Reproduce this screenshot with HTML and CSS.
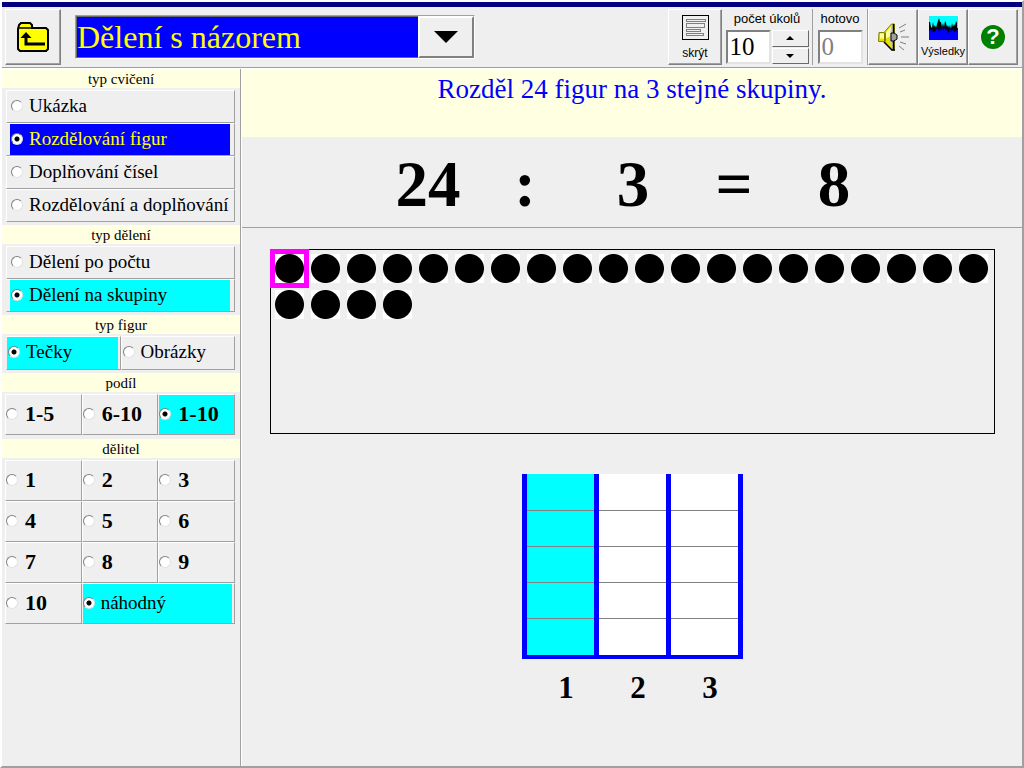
FILE: index.html
```html
<!DOCTYPE html>
<html lang="cs">
<head>
<meta charset="utf-8">
<title>Dělení s názorem</title>
<link rel="stylesheet" href="styles.css">
</head>
<body>
<div class="window">
  <header class="toolbar">
    <button class="tool back" type="button" aria-label="Zpět">
      <svg width="32" height="30" viewBox="0 0 32 30"><path d="M2 3l2-2h9l2 2v3h14l2 2v19l-2 2H3l-2-2V7z" fill="#ff0" stroke="#000" stroke-width="2"/><path d="M2 6h13" stroke="#000" stroke-width="1.5"/><path d="M9 15v7h19" fill="none" stroke="#000" stroke-width="3"/><path d="M3.500 16l5.500-6 5.500 6z" fill="#000"/></svg>
    </button>
    <div class="combo">
      <select class="combo-select" aria-label="Cvičení"><option>Dělení s názorem</option></select>
      <span class="combo-arrow"><svg width="24" height="12" viewBox="0 0 24 12"><path d="M0 0h24L12 12z"/></svg></span>
    </div>
    <button class="tool hide" type="button">
      <svg width="27" height="25" viewBox="0 0 27 25" fill="none" shape-rendering="crispEdges"><path d="M.5.5h26v24H.5z" stroke="#000"/><path d="M4.500 4.500h19v2h-19zM4.500 8.500h18v4h-18zM4.500 14.500h14v2h-14zM4.500 18.500h17v2h-17z" stroke="#808080"/></svg>
      <span>skrýt</span>
    </button>
    <div class="field">
      <label for="count">počet úkolů</label>
      <div class="field-row">
        <input id="count" class="number" type="text" value="10">
        <div class="spinner">
          <button type="button" aria-label="Více"><svg width="8" height="4" viewBox="0 0 8 4"><path d="M0 4h8L4 0z"/></svg></button>
          <button type="button" aria-label="Méně"><svg width="8" height="4" viewBox="0 0 8 4"><path d="M0 0h8L4 4z"/></svg></button>
        </div>
      </div>
    </div>
    <div class="field done">
      <label for="done">hotovo</label>
      <input id="done" class="number" type="text" value="0" disabled>
    </div>
    <button class="tool narrow" type="button" aria-label="Zvuk">
      <svg width="31" height="28" viewBox="0 0 31 28"><path d="M1 9.500h5L13.500 1h3v26h-3L6 18.500H.5z" fill="#e8e000" stroke="#808000"/><path d="M2 10.500h5l6-7v9l-5 3H2z" fill="#ffff9c"/><path d="M7 9.500v9" stroke="#808000" stroke-width="2"/><path d="M13.500 2c-2 8-2 16 0 24h1.500V2z" fill="#c8c8c8"/><path d="M15.500 1v26M6 19l8 8h3" fill="none" stroke="#000" stroke-width="1.500"/><path d="M13 10h3l3 2v4l-3 2h-3z" fill="#a0a0a0" stroke="#000"/><path d="M21 5l7-4M22 9l5-2M23 14h8M22 19l6 2M21 23l5 4" stroke="#808080"/></svg>
    </button>
    <button class="tool narrow results" type="button">
      <svg width="29" height="24" viewBox="0 0 29 24"><path d="M0 0h29v24H0z" fill="#0ff"/><path d="M0 12h29v12H0z" fill="#00f"/><path d="M0 6l1 0 1 5 1 1 1-6 1 5 1-2 1 3 1-4 1-3 1-3 1 4 1 0 1 5 1-4 1 4 1-6 1 2 1 4 1-2 1 3 1-3 1 4 1-6 1 4 1-3 1 2 1-5 1 2v8l-1-1-1 3-1-3-1 1-1-2-1 3-1-4-1 4-1 1-1-4-1 2-1-2-1-1-1 3-1-4-1 4-1-3-1 4-1-4-1 2-1-2-1 4-1-1-1 2-1-4-1 2-1-2-1 3-1-4z" fill="#000"/></svg>
      <span>Výsledky</span>
    </button>
    <button class="tool narrow" type="button" aria-label="Nápověda"><span class="help">?</span></button>
  </header>

  <div class="body">
    <form class="sidebar">
      <h2>typ cvičení</h2>
      <div class="group">
        <label class="option"><input type="radio" name="exercise"><span>Ukázka</span></label>
        <label class="option primary"><input type="radio" name="exercise" checked><span>Rozdělování figur</span></label>
        <label class="option"><input type="radio" name="exercise"><span>Doplňování čísel</span></label>
        <label class="option"><input type="radio" name="exercise"><span>Rozdělování a doplňování</span></label>
      </div>
      <h2>typ dělení</h2>
      <div class="group">
        <label class="option"><input type="radio" name="division"><span>Dělení po počtu</span></label>
        <label class="option"><input type="radio" name="division" checked><span>Dělení na skupiny</span></label>
      </div>
      <h2>typ figur</h2>
      <div class="group two">
        <label class="option"><input type="radio" name="figure" checked><span>Tečky</span></label>
        <label class="option"><input type="radio" name="figure"><span>Obrázky</span></label>
      </div>
      <h2>podíl</h2>
      <div class="group three">
        <label class="option"><input type="radio" name="quotient"><span>1-5</span></label>
        <label class="option"><input type="radio" name="quotient"><span>6-10</span></label>
        <label class="option"><input type="radio" name="quotient" checked><span>1-10</span></label>
      </div>
      <h2>dělitel</h2>
      <div class="group three">
        <label class="option"><input type="radio" name="divisor"><span>1</span></label>
        <label class="option"><input type="radio" name="divisor"><span>2</span></label>
        <label class="option"><input type="radio" name="divisor"><span>3</span></label>
        <label class="option"><input type="radio" name="divisor"><span>4</span></label>
        <label class="option"><input type="radio" name="divisor"><span>5</span></label>
        <label class="option"><input type="radio" name="divisor"><span>6</span></label>
        <label class="option"><input type="radio" name="divisor"><span>7</span></label>
        <label class="option"><input type="radio" name="divisor"><span>8</span></label>
        <label class="option"><input type="radio" name="divisor"><span>9</span></label>
        <label class="option"><input type="radio" name="divisor"><span>10</span></label>
        <label class="option random"><input type="radio" name="divisor" checked><span>náhodný</span></label>
      </div>
    </form>

    <main class="stage">
      <h1 class="prompt">Rozděl 24 figur na 3 stejné skupiny.</h1>
      <div class="equation"><span>24</span><span>:</span><span>3</span><span>=</span><span>8</span></div>
      <div class="pool">
        <i class="dot selected"></i><i class="dot"></i><i class="dot"></i><i class="dot"></i><i class="dot"></i><i class="dot"></i>
        <i class="dot"></i><i class="dot"></i><i class="dot"></i><i class="dot"></i><i class="dot"></i><i class="dot"></i>
        <i class="dot"></i><i class="dot"></i><i class="dot"></i><i class="dot"></i><i class="dot"></i><i class="dot"></i>
        <i class="dot"></i><i class="dot"></i><i class="dot"></i><i class="dot"></i><i class="dot"></i><i class="dot"></i>
      </div>
      <div class="bins">
        <div class="bin active"><i></i><i></i><i></i><i></i><i></i></div>
        <div class="bin"><i></i><i></i><i></i><i></i><i></i></div>
        <div class="bin"><i></i><i></i><i></i><i></i><i></i></div>
      </div>
      <div class="bin-labels"><span>1</span><span>2</span><span>3</span></div>
    </main>
  </div>
</div>
</body>
</html>
```
FILE: styles.css
```css
* { box-sizing: border-box; }

body {
  margin: 0;
  background: #efefef;
  color: #000;
  font-family: "Liberation Serif", serif;
}

button, input, select { margin: 0; font: inherit; color: inherit; border-radius: 0; }
button { cursor: pointer; }
svg { display: block; flex: none; }

.window {
  display: flex;
  flex-direction: column;
  min-height: 100vh;
  border: 2px solid;
  border-color: #fff #a0a0a0 #a0a0a0 #fff;
}

/* Toolbar */
.toolbar {
  display: flex;
  align-items: center;
  padding: 0 4px 0 3px;
  border-top: 5px solid #000080;
  border-bottom: 1px solid #a0a0a0;
  height: 66px;
  font-family: "Liberation Sans", sans-serif;
  font-size: 12px;
  line-height: 14px;
}

.tool {
  display: flex;
  flex-direction: column;
  align-items: center;
  justify-content: center;
  gap: 6px;
  width: 54px;
  height: 56px;
  padding: 0;
  background: #efefef;
  border: 1px solid;
  border-color: #fff #808080 #808080 #fff;
  box-shadow: inset -1px -1px #a0a0a0;
}

.narrow { width: 50px; }
.back { width: 56px; margin-right: 14px; }

.results { gap: 4px; font-size: 11px; }

.help {
  width: 24px;
  height: 24px;
  border-radius: 50%;
  background: #008000;
  color: #fff;
  font-size: 22px;
  font-weight: bold;
  line-height: 24px;
}

.combo {
  position: relative;
  width: 400px;
  height: 44px;
  border: 1px solid;
  border-color: #a0a0a0 #fff #fff #a0a0a0;
  margin-right: auto;
}

.combo-select {
  appearance: none;
  display: block;
  width: 100%;
  height: 100%;
  padding: 0 56px 0 0;
  border: 1px solid #696969;
  background: #00f;
  color: #ff0;
  font-family: "Liberation Serif", serif;
  font-size: 32px;
  line-height: 40px;
}

.combo-arrow {
  position: absolute;
  top: 0;
  right: 0;
  bottom: 0;
  display: flex;
  align-items: center;
  justify-content: center;
  width: 56px;
  background: #efefef;
  border: 2px solid;
  border-color: #fff #808080 #808080 #fff;
  pointer-events: none;
}

.field {
  display: flex;
  flex-direction: column;
  align-items: center;
  gap: 4px;
  width: 91px;
  height: 56px;
  padding: 3px 4px 0;
  border-right: 1px solid #a0a0a0;
  font-size: 13px;
}

.done { width: 55px; }
.field-row { display: flex; gap: 1px; }

.number {
  width: 45px;
  height: 34px;
  padding: 0 2px;
  background: #fff;
  border: 2px solid;
  border-color: #808080 #e3e3e3 #e3e3e3 #808080;
  font-family: "Liberation Serif", serif;
  font-size: 25px;
}

.number:disabled { background: #fff; color: #808080; }

.spinner { display: grid; gap: 1px; width: 37px; }

.spinner button {
  display: flex;
  align-items: center;
  justify-content: center;
  padding: 0;
  background: #efefef;
  border: 1px solid;
  border-color: #fff #696969 #696969 #fff;
}

/* Layout below the toolbar */
.body { display: flex; flex: 1; border-top: 1px solid #fff; }

.sidebar {
  flex: none;
  width: 239px;
  border-right: 1px solid #a0a0a0;
}

.sidebar h2 {
  margin: 0;
  padding-top: 1px;
  background: #ffffe1;
  font-size: 15px;
  font-weight: normal;
  line-height: 18px;
  text-align: center;
}

.group { display: grid; padding: 2px 5px 3px 4px; }

.option {
  display: flex;
  align-items: center;
  gap: 6px;
  height: 33px;
  padding: 0 0 2px 4px;
  border: 1px solid;
  border-color: #fff #a0a0a0 #a0a0a0 #fff;
  font-size: 19px;
  line-height: 24px;
  white-space: nowrap;
}

.option:has(:checked) {
  background: #0ff;
  border-left-color: #efefef;
  box-shadow: inset 3px 0 #efefef, inset -4px 0 #efefef;
}

.primary:has(:checked) { background: #00f; color: #ff0; }

.option input {
  appearance: none;
  flex: none;
  width: 12px;
  height: 12px;
  border: 1px solid;
  border-color: #808080 #e3e3e3 #e3e3e3 #808080;
  border-radius: 50%;
  background: #fff;
}

.option input:checked { background: radial-gradient(circle, #000 2px, #fff 3px); }

.two { grid-template-columns: 1fr 1fr; }
.two .option { height: 34px; padding-left: 1px; }
.two .option:has(:checked) { box-shadow: inset -2px 0 #efefef; }

.three { grid-template-columns: repeat(3, 1fr); padding: 2px 5px 4px 3px; }

.three .option {
  height: 41px;
  padding-left: 0;
  gap: 7px;
  font-size: 22px;
  font-weight: bold;
}

.three .option:has(:checked) { box-shadow: none; }
.three .random { grid-column: span 2; gap: 6px; font-size: 19px; font-weight: normal; }
.three .random:has(:checked) { box-shadow: inset -2px 0 #efefef; }

/* Exercise area */
.stage {
  flex: 1;
  min-width: 0;
  border-left: 1px solid #fff;
}

.prompt {
  min-height: 68px;
  margin: 0;
  padding-top: 4px;
  background: #ffffe1;
  color: #00f;
  font-size: 27px;
  font-weight: normal;
  line-height: 32px;
  text-align: center;
}

.equation {
  display: grid;
  grid-template-columns: 112px 82px 134px 68px 132px;
  justify-content: center;
  align-items: center;
  height: 91px;
  padding: 4px 0 0 8px;
  border-bottom: 1px solid #a0a0a0;
  font-size: 65px;
  font-weight: bold;
  line-height: 72px;
  text-align: center;
}

.pool {
  display: flex;
  flex-wrap: wrap;
  align-content: flex-start;
  gap: 7px;
  min-height: 185px;
  margin: 21px 27px 40px 28px;
  padding: 4px;
  border: 1px solid #000;
}

.dot {
  width: 29px;
  height: 29px;
  background: radial-gradient(circle, #000 14px, #fff 15px);
}

.selected { outline: 5px solid #f0f; }

.bins {
  display: flex;
  justify-content: center;
}

.bin {
  width: 72px;
  background: #fff;
  border-left: 5px solid #00f;
  border-bottom: 4px solid #00f;
}

.bin:last-child { width: 77px; border-right: 5px solid #00f; }
.active { background: #0ff; }

.bin i { display: block; height: 36px; border-bottom: 1px solid #808080; }
.bin i:first-child { height: 37px; }
.bin i:last-child { border-bottom: 0; }

.bin-labels {
  display: flex;
  justify-content: center;
  padding: 11px 0 0 12px;
  font-size: 31px;
  font-weight: bold;
  line-height: 36px;
}

.bin-labels span { width: 72px; text-align: center; }
```
